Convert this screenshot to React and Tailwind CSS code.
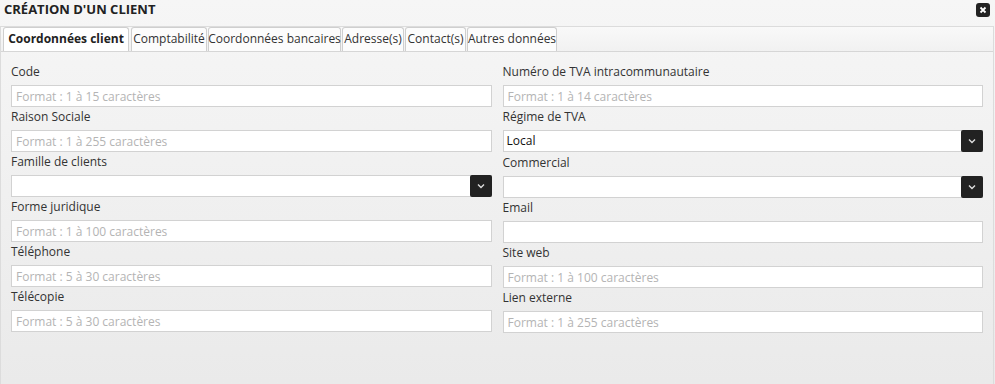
import React from "react";

const leftFields = [
    { label: "Code", placeholder: "Format : 1 à 15 caractères" },
    { label: "Raison Sociale", placeholder: "Format : 1 à 255 caractères" },
    { label: "Famille de clients", select: true, value: "" },
    { label: "Forme juridique", placeholder: "Format : 1 à 100 caractères" },
    { label: "Téléphone", placeholder: "Format : 5 à 30 caractères" },
    { label: "Télécopie", placeholder: "Format : 5 à 30 caractères" },
];

const rightFields = [
    { label: "Numéro de TVA intracommunautaire", placeholder: "Format : 1 à 14 caractères" },
    { label: "Régime de TVA", select: true, value: "Local" },
    { label: "Commercial", select: true, value: "" },
    { label: "Email", placeholder: "" },
    { label: "Site web", placeholder: "Format : 1 à 100 caractères" },
    { label: "Lien externe", placeholder: "Format : 1 à 255 caractères" },
];

const tabs = [
    { name: "Coordonnées client", w: "w-[126px]", active: true },
    { name: "Comptabilité", w: "w-[76px]" },
    { name: "Coordonnées bancaires", w: "w-[133px]" },
    { name: "Adresse(s)", w: "w-[62px]" },
    { name: "Contact(s)", w: "w-[61px]" },
    { name: "Autres données", w: "w-[90px]" },
];

function Field({ field, shift }) {
    return (
        <div className={`flex flex-col ${shift ? "mt-[1px]" : ""}`}>
            <label className="h-[18px] leading-[18px] pt-[1px] text-[12px] text-[#333]">{field.label}</label>
            {field.select ? (
                <div className="mt-[5px] flex h-[22px] border border-[#d2d2d2] bg-white">
                    <div className="flex-1 px-[3px] leading-[20px] text-[12px] text-[#111]">{field.value}</div>
                    <div className="-my-px -mr-px flex w-[22px] items-center justify-center rounded-[2px] bg-[#222]">
                        <svg width="8" height="6" viewBox="0 0 8 6">
                            <path d="M1 1.5 L4 4.5 L7 1.5" stroke="#ddd" strokeWidth="1.4" fill="none" />
                        </svg>
                    </div>
                </div>
            ) : (
                <input
                    className="mt-[5px] h-[22px] border border-[#d2d2d2] bg-white px-[4px] text-[12px] text-[#333] outline-none placeholder:text-[#b4b4b4]"
                    placeholder={field.placeholder}
                />
            )}
        </div>
    );
}

export default function App() {
    return (
        <div className="w-[995px] h-[384px] overflow-hidden bg-gradient-to-b from-[#f6f6f6] to-[#eaeaea] font-['Open_Sans',sans-serif]">
            <div className="flex h-[26px] items-start justify-between pl-[4px] pr-[5px] pt-[1px]">
                <h1 className="text-[13px] leading-[16px] font-bold text-[#222]">CRÉATION D'UN CLIENT</h1>
                <button className="mt-[2px] flex h-[14px] w-[14px] items-center justify-center rounded-[3px] bg-[#222]">
                    <svg width="8" height="8" viewBox="0 0 8 8">
                        <path d="M1.5 1.5 L6.5 6.5 M6.5 1.5 L1.5 6.5" stroke="#fff" strokeWidth="1.8" />
                    </svg>
                </button>
            </div>
            <div className="h-[358px] w-[994px] border-l border-r border-t border-[#dcdcdc]">
                <div className="flex h-[25px] items-end gap-[1px] border-b border-[#d6d6d6] bg-gradient-to-b from-[#f9f9f9] to-[#f1f1f1] pl-[2px]">
                    {tabs.map((tab, i) => (
                        <div
                            key={tab.name}
                            className={`${tab.w} ${i === 1 ? "ml-[1px]" : ""} flex h-[24px] items-center justify-center whitespace-nowrap rounded-t-[3px] border border-b-0 border-[#cfcfcf] pb-[1px] ${
                                tab.active ? "bg-white text-[12px] font-bold text-[#222]" : "bg-[#fcfcfc] text-[12px] text-[#333]"
                            }`}
                        >
                            {tab.name}
                        </div>
                    ))}
                </div>
                <div className="grid grid-cols-2 gap-x-[11px] px-[10px] pt-[10px]">
                    <div className="flex flex-col">
                        {leftFields.map((f) => (
                            <Field key={f.label} field={f} />
                        ))}
                    </div>
                    <div className="flex flex-col">
                        {rightFields.map((f, i) => (
                            <Field key={f.label} field={f} shift={i === 2} />
                        ))}
                    </div>
                </div>
            </div>
        </div>
    );
}
